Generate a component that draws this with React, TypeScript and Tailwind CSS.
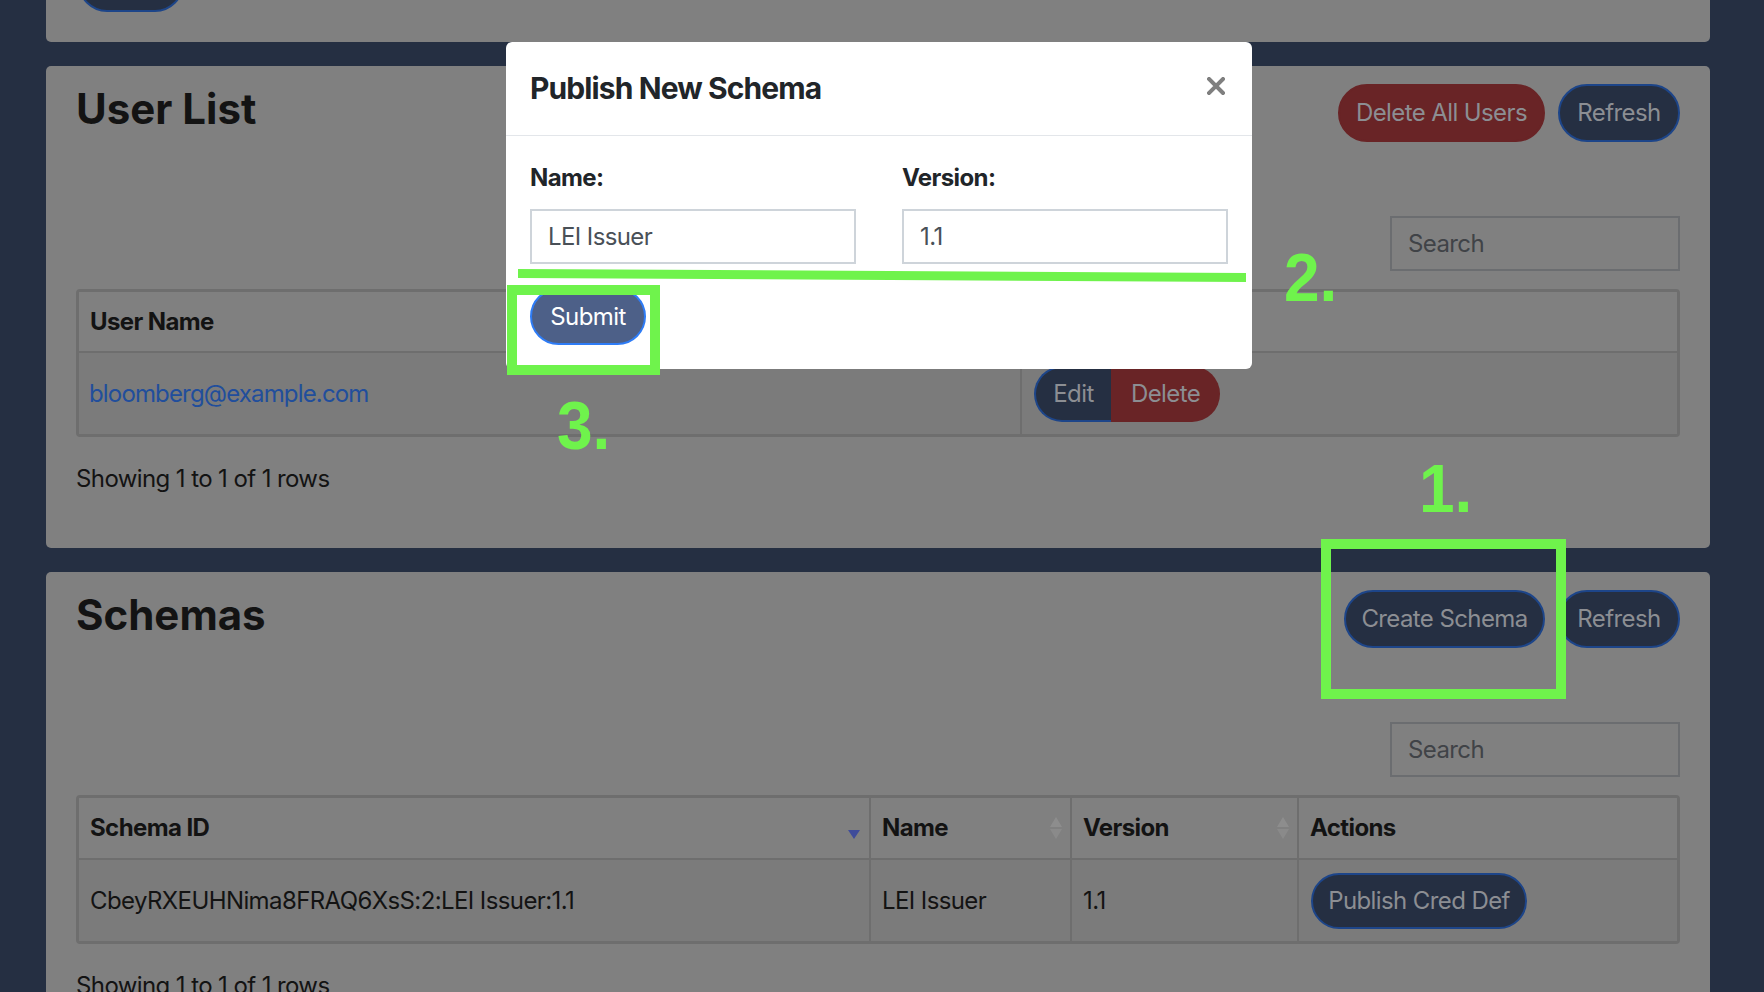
import React from "react";

const TXT = "text-[24px] leading-[36px] tracking-[-0.025em]";

function NavyBtn({ children, w }: { children?: React.ReactNode; w: string }) {
  return (
    <button
      className={`h-[58px] ${w} shrink-0 rounded-full border-2 border-[#1d4589] bg-[#252f42] text-[24px] leading-none tracking-[-0.025em] text-[#8c8e93]`}
    >
      {children}
    </button>
  );
}

function RedBtn({ children, w }: { children?: React.ReactNode; w: string }) {
  return (
    <button
      className={`h-[58px] ${w} shrink-0 rounded-full border-2 border-[#692426] bg-[#692426] text-[24px] leading-none tracking-[-0.025em] text-[#8c8e93]`}
    >
      {children}
    </button>
  );
}

function CardHeader({ title, buttons }: { title: string; buttons: React.ReactNode }) {
  return (
    <div className="flex items-start justify-between">
      <h3 className="text-[42px] font-bold leading-[50px] text-[#131313]">{title}</h3>
      <div className="flex gap-[13px]">{buttons}</div>
    </div>
  );
}

function SearchBox() {
  return (
    <div className="mt-[74px] flex justify-end">
      <input
        readOnly
        placeholder="Search"
        className={`h-[55px] w-[290px] border-2 border-[#6b6d70] bg-transparent px-[16px] ${TXT} text-[#404347] outline-none placeholder:text-[#404347]`}
      />
    </div>
  );
}

function SortBoth() {
  return (
    <svg width="12" height="22" viewBox="0 0 12 22" className="shrink-0">
      <polygon points="6,0 12,10 0,10" fill="#8d8d8d" />
      <polygon points="0,12 12,12 6,22" fill="#8a8a8a" />
    </svg>
  );
}

function SortDown() {
  return (
    <svg width="12" height="9" viewBox="0 0 12 9" className="mt-[12px] shrink-0">
      <polygon points="0,0 12,0 6,9" fill="#3f4c9a" />
    </svg>
  );
}

const NUM =
  "pointer-events-none absolute origin-top-left scale-y-[1.08] font-['Liberation_Sans',Arial,sans-serif] text-[64px] font-bold leading-none text-[#6ff34c]";

function App() {
  return (
    <div className="relative h-[992px] w-full overflow-hidden bg-[#252f42] font-[Inter,'Liberation_Sans',sans-serif] text-[#131313]">
      <div className="flex flex-col gap-[24px] pl-[46px] pr-[54px]">
        {/* previous card remnant */}
        <div className="flex h-[42px] items-end overflow-hidden rounded-b-[5px] bg-[#808080] pb-[30px] pl-[32px]">
          <div className="h-[58px] w-[106px] shrink-0 rounded-full border-2 border-[#1d4589] bg-[#252f42]" />
        </div>

        {/* User List card */}
        <div className="h-[482px] rounded-[5px] bg-[#808080] px-[30px] pt-[18px]">
          <CardHeader
            title="User List"
            buttons={
              <>
                <RedBtn w="w-[207px]">Delete All Users</RedBtn>
                <NavyBtn w="w-[122px]">Refresh</NavyBtn>
              </>
            }
          />
          <SearchBox />
          <div className="mt-[18px] overflow-hidden rounded-[4px] border-[3px] border-[#6e6e6e]">
            <div className="grid h-[61px] grid-cols-[941px_1fr] border-b-2 border-[#6e6e6e] bg-[#808080]">
              <div className={`flex items-center pl-[11px] font-bold ${TXT}`}>User Name</div>
              <div className={`flex items-center border-l-2 border-[#6e6e6e] pl-[11px] font-bold ${TXT}`}>Actions</div>
            </div>
            <div className="grid h-[81px] grid-cols-[941px_1fr] bg-[#7b7b7b]">
              <div className={`flex items-center pl-[10px] text-[24px] leading-[36px] tracking-[-0.035em] text-[#214e9c]`}>
                bloomberg@example.com
              </div>
              <div className="flex items-center border-l-2 border-[#6e6e6e] pl-[12px]">
                <div className="flex h-[56px]">
                  <button className="w-[77px] rounded-l-full border-2 border-r-0 border-[#1d4589] bg-[#252f42] text-[24px] leading-none tracking-[-0.025em] text-[#8c8e93]">
                    Edit
                  </button>
                  <button className="w-[109px] rounded-r-full bg-[#692426] text-[24px] leading-none tracking-[-0.025em] text-[#8c8e93]">
                    Delete
                  </button>
                </div>
              </div>
            </div>
          </div>
          <div className={`mt-[24px] ${TXT}`}>Showing 1 to 1 of 1 rows</div>
        </div>

        {/* Schemas card */}
        <div className="h-[500px] rounded-[5px] bg-[#808080] px-[30px] pt-[18px]">
          <CardHeader
            title="Schemas"
            buttons={
              <>
                <NavyBtn w="w-[201px]">Create Schema</NavyBtn>
                <NavyBtn w="w-[122px]">Refresh</NavyBtn>
              </>
            }
          />
          <SearchBox />
          <div className="mt-[18px] overflow-hidden rounded-[4px] border-[3px] border-[#6e6e6e]">
            <div className="grid h-[62px] grid-cols-[790px_201px_227px_1fr] border-b-2 border-[#6e6e6e] bg-[#808080]">
              <div className={`flex items-center justify-between pl-[11px] pr-[9px] font-bold ${TXT}`}>
                <span>Schema ID</span>
                <SortDown />
              </div>
              <div className={`flex items-center justify-between border-l-2 border-[#6e6e6e] pl-[11px] pr-[8px] font-bold ${TXT}`}>
                <span>Name</span>
                <SortBoth />
              </div>
              <div className={`flex items-center justify-between border-l-2 border-[#6e6e6e] pl-[11px] pr-[8px] font-bold ${TXT}`}>
                <span>Version</span>
                <SortBoth />
              </div>
              <div className={`flex items-center border-l-2 border-[#6e6e6e] pl-[11px] font-bold ${TXT}`}>Actions</div>
            </div>
            <div className="grid h-[81px] grid-cols-[790px_201px_227px_1fr] bg-[#7b7b7b]">
              <div className={`flex items-center pl-[11px] ${TXT}`}>CbeyRXEUHNima8FRAQ6XsS:2:LEI Issuer:1.1</div>
              <div className={`flex items-center border-l-2 border-[#6e6e6e] pl-[11px] ${TXT}`}>LEI Issuer</div>
              <div className={`flex items-center border-l-2 border-[#6e6e6e] pl-[11px] ${TXT}`}>1.1</div>
              <div className="flex items-center border-l-2 border-[#6e6e6e] pl-[12px]">
                <button className="h-[56px] w-[216px] rounded-full border-2 border-[#1d4589] bg-[#252f42] text-[24px] leading-none tracking-[-0.025em] text-[#8c8e93]">
                  Publish Cred Def
                </button>
              </div>
            </div>
          </div>
          <div className={`mt-[24px] ${TXT}`}>Showing 1 to 1 of 1 rows</div>
        </div>
      </div>

      {/* Modal */}
      <div className="absolute left-[506px] top-[42px] w-[746px] rounded-[6px] bg-white">
        <div className="flex items-center justify-between border-b-[1.5px] border-[#e3e6ea] px-[24px] py-[24px]">
          <h5 className="text-[30px] font-bold leading-[45px] tracking-[-0.03em] text-[#212529]">Publish New Schema</h5>
          <svg width="18" height="18" viewBox="0 0 18 18" className="mb-[6px] mr-[3px]">
            <path d="M2 2 L16 16 M16 2 L2 16" stroke="#7f7f7f" strokeWidth="4" strokeLinecap="square" />
          </svg>
        </div>
        <div className="p-[24px]">
          <div className="grid grid-cols-2 gap-[46px]">
            <div>
              <label className={`block font-bold ${TXT} text-[#212529]`}>Name:</label>
              <input
                readOnly
                value="LEI Issuer"
                className={`mt-[13px] h-[55px] w-full border-2 border-[#ced4da] px-[16px] ${TXT} text-[#495057] outline-none`}
              />
            </div>
            <div>
              <label className={`block font-bold ${TXT} text-[#212529]`}>Version:</label>
              <input
                readOnly
                value="1.1"
                className={`mt-[13px] h-[55px] w-full border-2 border-[#ced4da] px-[16px] ${TXT} text-[#495057] outline-none`}
              />
            </div>
          </div>
          <button className="mt-[24px] h-[57px] w-[116px] rounded-full border-2 border-[#2e7cf6] bg-[#4d6088] text-[24px] leading-none tracking-[-0.025em] text-white">
            Submit
          </button>
        </div>
      </div>

      {/* Annotations */}
      <svg className="pointer-events-none absolute left-0 top-0" width="1764" height="992" viewBox="0 0 1764 992">
        <polygon points="518,269 1246,273 1246,282 518,278" fill="#6ff34c" />
        <rect x="512" y="290" width="143" height="80" fill="none" stroke="#6ff34c" strokeWidth="10" />
        <rect x="1326" y="544" width="235" height="150" fill="none" stroke="#6ff34c" strokeWidth="10" />
      </svg>
      <div className={`${NUM} left-[1284px] top-[243px]`}>2.</div>
      <div className={`${NUM} left-[557px] top-[391px]`}>3.</div>
      <div className={`${NUM} left-[1419px] top-[454px]`}>1.</div>
    </div>
  );
}

export default App;
